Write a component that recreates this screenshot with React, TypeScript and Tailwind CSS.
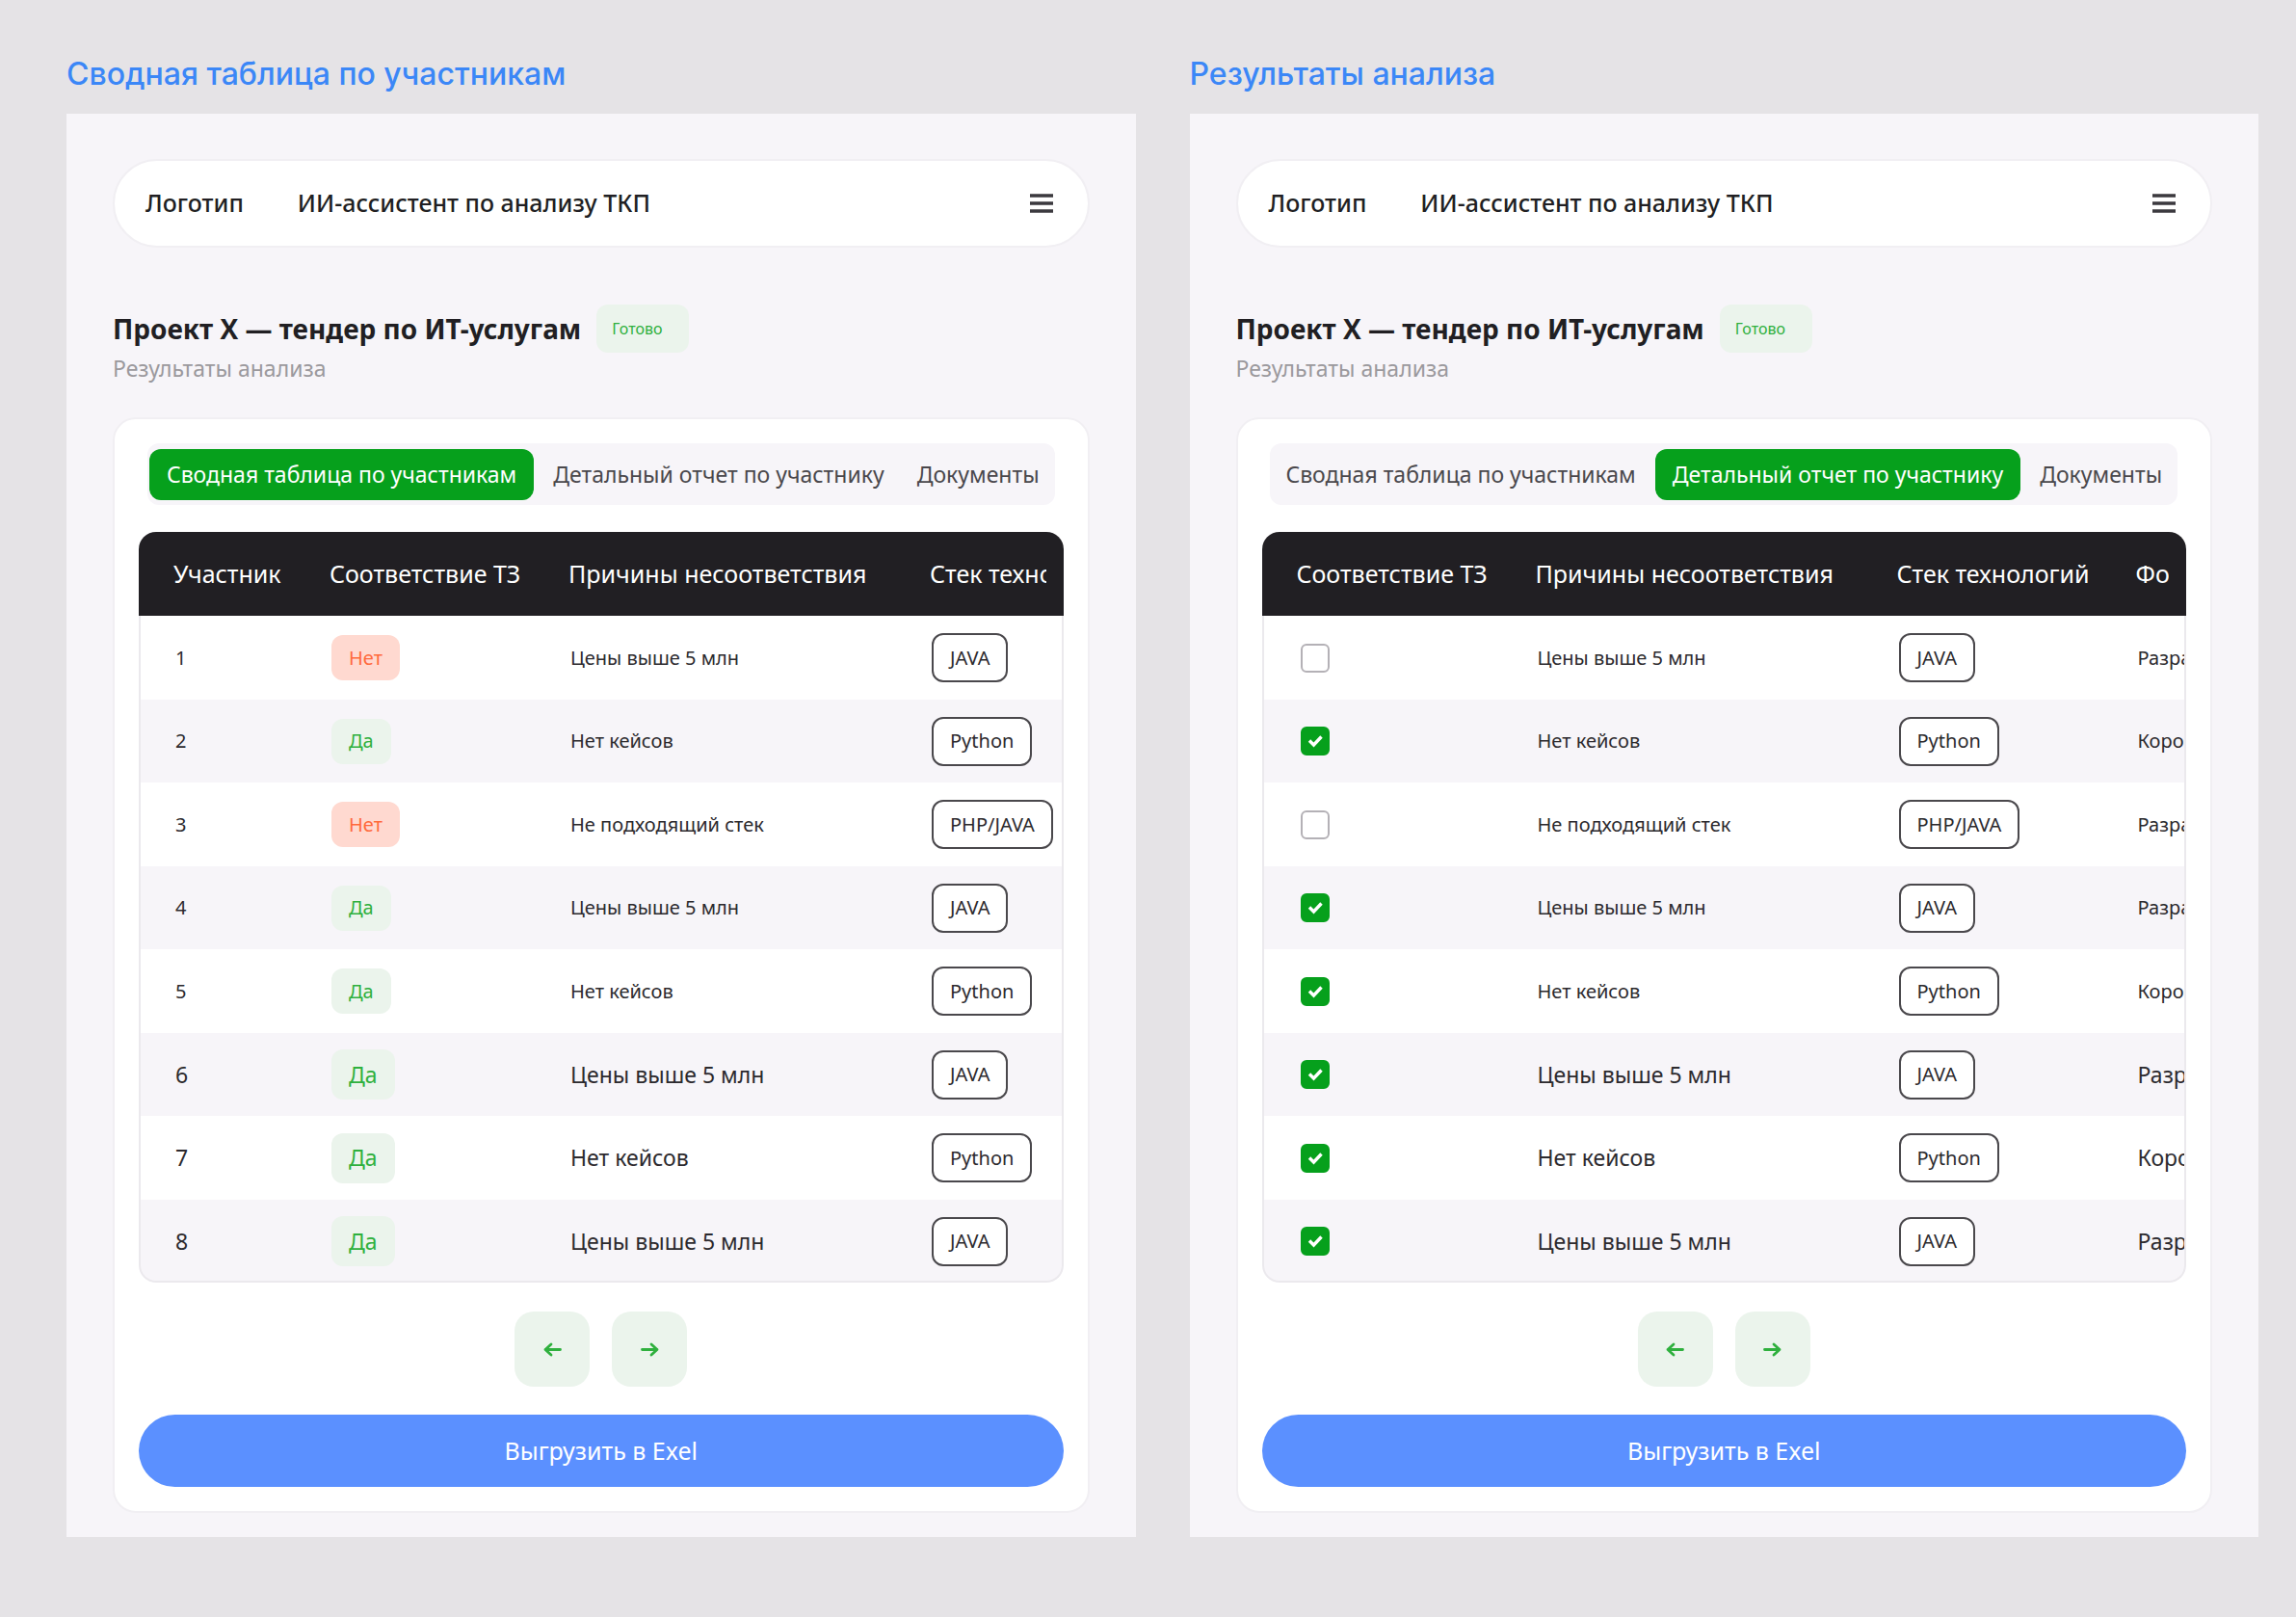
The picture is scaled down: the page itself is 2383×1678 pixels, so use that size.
import { useState } from 'react';

type Tab = 'summary' | 'details' | 'documents';

interface Participant {
  id: number;
  match: boolean;
  reason: string;
  stack: string;
  form: string;
  large?: boolean;
}

const participants: Participant[] = [
  { id: 1, match: false, reason: 'Цены выше 5 млн', stack: 'JAVA', form: 'Разработка' },
  { id: 2, match: true, reason: 'Нет кейсов', stack: 'Python', form: 'Коробка' },
  { id: 3, match: false, reason: 'Не подходящий стек', stack: 'PHP/JAVA', form: 'Разработка' },
  { id: 4, match: true, reason: 'Цены выше 5 млн', stack: 'JAVA', form: 'Разработка' },
  { id: 5, match: true, reason: 'Нет кейсов', stack: 'Python', form: 'Коробка' },
  { id: 6, match: true, reason: 'Цены выше 5 млн', stack: 'JAVA', form: 'Разработка', large: true },
  { id: 7, match: true, reason: 'Нет кейсов', stack: 'Python', form: 'Коробка', large: true },
  { id: 8, match: true, reason: 'Цены выше 5 млн', stack: 'JAVA', form: 'Разработка', large: true },
];

const tabs: { id: Tab; label: string }[] = [
  { id: 'summary', label: 'Сводная таблица по участникам' },
  { id: 'details', label: 'Детальный отчет по участнику' },
  { id: 'documents', label: 'Документы' },
];

const headCell = 'p-0 pl-9 text-left text-[25px] font-normal whitespace-nowrap';
const bodyCell = 'p-0 pl-[38px] whitespace-nowrap';

const TopBar = () => (
  <header className="flex h-[92px] items-center rounded-full border-2 border-[#f1eff3] bg-white px-8 text-[25px] font-medium text-[#211f23]">
    <a href="#home">Логотип</a>
    <p className="ml-14">ИИ-ассистент по анализу ТКП</p>
    <button type="button" aria-label="Меню" className="mr-1 ml-auto">
      <svg width="24" height="20" viewBox="0 0 24 20" stroke="#3b393e" strokeWidth="3.6">
        <path d="M0 2h24M0 10h24M0 18h24" />
      </svg>
    </button>
  </header>
);

const Arrow = ({ direction }: { direction: 'left' | 'right' }) => (
  <svg width="19" height="15" viewBox="0 0 19 15" fill="none" stroke="#2fb03e" strokeWidth="2.8" strokeLinecap="round" strokeLinejoin="round">
    {direction === 'left' ? <path d="M17.500 7.500H2M8 2 2 7.500l6 5.500" /> : <path d="M1.500 7.500H17M11 2l6 5.500-6 5.500" />}
  </svg>
);

const MatchBadge = ({ match, large }: { match: boolean; large?: boolean }) => (
  <span
    className={`inline-flex items-center rounded-xl px-[18px] ${large ? 'h-[52px] text-[23px]' : 'h-[47px] text-xl'} ${
      match ? 'bg-[#ebf4ec] text-[#2fb03e]' : 'bg-[#ffd9d0] text-[#ff6a3c]'
    }`}
  >
    {match ? 'Да' : 'Нет'}
  </span>
);

const MatchCheckbox = ({ id, checked, onChange }: { id: number; checked: boolean; onChange: () => void }) => (
  <label className="ml-[2px] grid w-[30px]">
    <input
      type="checkbox"
      aria-label={`Соответствие ТЗ, участник ${id}`}
      checked={checked}
      onChange={onChange}
      className="col-start-1 row-start-1 size-[30px] appearance-none rounded-md border-2 border-[#b4b1b6] bg-white checked:border-[#06a01c] checked:bg-[#06a01c]"
    />
    {checked && (
      <svg className="pointer-events-none col-start-1 row-start-1" width="30" height="30" viewBox="0 0 30 30" fill="none" stroke="#fff" strokeWidth="3.4">
        <path d="m9 14.5 4.500 4.500L21.500 10.500" />
      </svg>
    )}
  </label>
);

const ResultsTable = ({ detailed }: { detailed: boolean }) => {
  const [matched, setMatched] = useState<number[]>(participants.filter((item) => item.match).map((item) => item.id));

  const toggle = (id: number) => {
    setMatched((prev) => (prev.includes(id) ? prev.filter((item) => item !== id) : [...prev, id]));
  };

  return (
    <div className="relative mt-7 overflow-hidden rounded-[18px] after:pointer-events-none after:absolute after:inset-x-0 after:top-[87px] after:bottom-0 after:rounded-b-[18px] after:border-2 after:border-t-0 after:border-[#ebe9ed]">
      <table className="w-full table-fixed border-collapse">
        <colgroup>
          {!detailed && <col className="w-[162px]" />}
          <col className="w-[248px]" />
          <col className="w-[375px]" />
          {detailed && <col className="w-[248px]" />}
          <col />
        </colgroup>
        <thead>
          <tr className="h-[87px] bg-[#211f23] text-white">
            {!detailed && <th className={headCell}>Участник</th>}
            <th className={headCell}>Соответствие ТЗ</th>
            <th className={headCell}>Причины несоответствия</th>
            {detailed && <th className={headCell}>Стек технологий</th>}
            <th className={headCell}>
              <div className="mr-[18px] overflow-hidden">{detailed ? 'Формат' : 'Стек технологий'}</div>
            </th>
          </tr>
        </thead>
        <tbody className="text-[#2c2a2e]">
          {participants.map((item) => (
            <tr
              key={item.id}
              className={`odd:h-[87px] odd:bg-white even:h-[86px] even:bg-[#f7f5f9] ${item.large ? 'text-[23px]' : 'text-xl'}`}
            >
              {!detailed && <td className={bodyCell}>{item.id}</td>}
              <td className={bodyCell}>
                {detailed ? (
                  <MatchCheckbox id={item.id} checked={matched.includes(item.id)} onChange={() => toggle(item.id)} />
                ) : (
                  <MatchBadge match={item.match} large={item.large} />
                )}
              </td>
              <td className={bodyCell}>{item.reason}</td>
              <td className={bodyCell}>
                <span className="inline-flex h-[51px] items-center rounded-xl border-2 border-[#4a484c] bg-white px-[17px] text-xl">{item.stack}</span>
              </td>
              {detailed && <td className={bodyCell}>{item.form}</td>}
            </tr>
          ))}
        </tbody>
      </table>
    </div>
  );
};

const Screen = ({ title, initialTab }: { title: string; initialTab: Tab }) => {
  const [tab, setTab] = useState<Tab>(initialTab);

  return (
    <section className="min-w-0 flex-1">
      <h2 className="mb-5 font-['Inter',sans-serif] text-[32px] leading-[42px] font-medium text-[#3b87f7]">{title}</h2>

      <div className="bg-[#f7f5f9] px-12 pt-[47px] pb-[25px]">
        <TopBar />

        <div className="mt-[58px] flex items-center gap-4">
          <h1 className="text-[28px] leading-[52px] font-bold text-[#211f23]">Проект Х — тендер по ИТ-услугам</h1>
          <span className="flex h-[50px] items-center rounded-xl bg-[#ebf4ec] pr-7 pl-4 text-base text-[#2fb03e]">Готово</span>
        </div>
        <p className="text-[23px] leading-[30px] text-[#9b999d]">Результаты анализа</p>

        <div className="mt-9 rounded-3xl border-2 border-[#f1eff3] bg-white p-[25px]">
          <div role="tablist" className="mx-auto flex h-16 w-fit items-center gap-[6px] rounded-xl bg-[#f7f5f9] px-[2px]">
            {tabs.map((item) => (
              <button
                key={item.id}
                type="button"
                role="tab"
                aria-selected={tab === item.id}
                onClick={() => setTab(item.id)}
                className={`h-[53px] rounded-xl text-[23px] whitespace-nowrap ${
                  tab === item.id ? 'bg-[#06a01c] px-[18px] text-white' : 'px-[14px] text-[#4a484c]'
                }`}
              >
                {item.label}
              </button>
            ))}
          </div>

          <ResultsTable detailed={tab === 'details'} />

          <div className="mt-[30px] flex justify-center gap-[23px]">
            <button type="button" aria-label="Назад" className="flex size-[78px] items-center justify-center rounded-[20px] bg-[#ebf4ec]">
              <Arrow direction="left" />
            </button>
            <button type="button" aria-label="Вперед" className="flex size-[78px] items-center justify-center rounded-[20px] bg-[#ebf4ec]">
              <Arrow direction="right" />
            </button>
          </div>

          <button type="button" className="mt-[29px] h-[75px] w-full rounded-full bg-[#5b90ff] text-[25px] text-white">
            Выгрузить в Exel
          </button>
        </div>
      </div>
    </section>
  );
};

export default function App() {
  return (
    <main className="flex min-h-screen items-start gap-14 bg-[#e5e3e6] pt-14 pr-[39px] pb-20 pl-[69px] font-['Noto_Sans',sans-serif]">
      <Screen title="Сводная таблица по участникам" initialTab="summary" />
      <Screen title="Результаты анализа" initialTab="details" />
    </main>
  );
}
